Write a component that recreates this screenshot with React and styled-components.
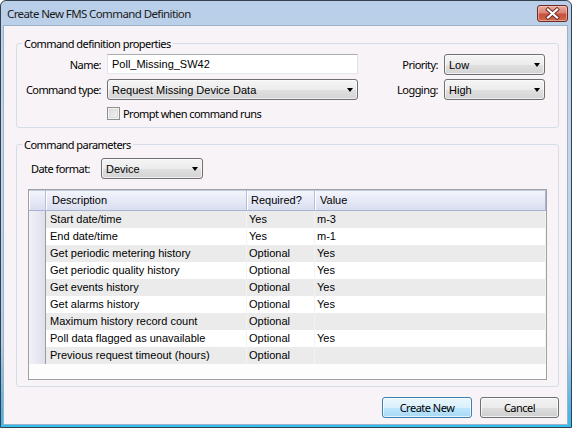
import React from "react";
import styled, { createGlobalStyle } from "styled-components";

const uiFont = `"Noto Sans", "Liberation Sans", sans-serif`;
const sysFont = `"Liberation Sans", Arial, sans-serif`;

const GlobalStyle = createGlobalStyle`
  html, body {
    margin: 0;
    padding: 0;
    background: #ffffff;
  }
  body {
    width: 572px;
    height: 428px;
    overflow: hidden;
  }
`;

const rows = [
  { desc: "Start date/time", req: "Yes", value: "m-3" },
  { desc: "End date/time", req: "Yes", value: "m-1" },
  { desc: "Get periodic metering history", req: "Optional", value: "Yes" },
  { desc: "Get periodic quality history", req: "Optional", value: "Yes" },
  { desc: "Get events history", req: "Optional", value: "Yes" },
  { desc: "Get alarms history", req: "Optional", value: "Yes" },
  { desc: "Maximum history record count", req: "Optional", value: "" },
  { desc: "Poll data flagged as unavailable", req: "Optional", value: "Yes" },
  { desc: "Previous request timeout (hours)", req: "Optional", value: "" },
];

const CloseIcon = () => (
  <svg width="29" height="15" viewBox="0 0 29 15">
    <path d="M10 3.5 L19 11.5 M19 3.5 L10 11.5" stroke="#6b2a20" strokeWidth="4" strokeLinecap="square" />
    <path d="M10 3.5 L19 11.5 M19 3.5 L10 11.5" stroke="#ffffff" strokeWidth="2.2" strokeLinecap="square" />
  </svg>
);

const App = () => {
  return (
    <>
      <GlobalStyle />
      <Window>
        <TitleBar>
          <Title>Create New FMS Command Definition</Title>
          <CloseButton>
            <CloseIcon />
          </CloseButton>
        </TitleBar>

        <Client>
          <Group>
            <Legend>Command definition properties</Legend>
            <PropsGrid>
              <Label>Name:</Label>
              <TextBox>Poll_Missing_SW42</TextBox>
              <Label>Priority:</Label>
              <Combo $w={101}>
                Low
                <Arrow />
              </Combo>

              <Label>Command type:</Label>
              <Combo $w={251}>
                Request Missing Device Data
                <Arrow />
              </Combo>
              <Label>Logging:</Label>
              <Combo $w={101}>
                High
                <Arrow />
              </Combo>

              <CheckRow>
                <CheckBox />
                <span>Prompt when command runs</span>
              </CheckRow>
            </PropsGrid>
          </Group>

          <Group $top={9}>
            <Legend>Command parameters</Legend>
            <ParamsBody>
              <DateRow>
                <DateLabel>Date format:</DateLabel>
                <Combo $w={102}>
                  Device
                  <Arrow />
                </Combo>
              </DateRow>

              <DataGrid>
                <HeaderRow>
                  <HeaderCell />
                  <HeaderCell $pad={6}>Description</HeaderCell>
                  <HeaderCell $pad={4}>Required?</HeaderCell>
                  <HeaderCell $pad={5}>Value</HeaderCell>
                </HeaderRow>
                {rows.map((r, i) => (
                  <BodyRow key={r.desc} $alt={i % 2 === 0}>
                    <RowHeader />
                    <Cell $pad={4}>{r.desc}</Cell>
                    <Cell>{r.req}</Cell>
                    <Cell>{r.value}</Cell>
                  </BodyRow>
                ))}
              </DataGrid>
            </ParamsBody>
          </Group>

          <ButtonRow>
            <Button $primary $w={90}>Create New</Button>
            <Button $w={79}>Cancel</Button>
          </ButtonRow>
        </Client>
      </Window>
    </>
  );
};

export default App;

const Window = styled.div`
  box-sizing: border-box;
  width: 572px;
  height: 428px;
  border: 1px solid #36414e;
  border-radius: 6px 6px 0 0;
  background: linear-gradient(#b9cee8 0%, #c3d6ec 30%, #b2cdea 80%, #4bb3e6 97%, #2fc0ee 100%);
  display: flex;
  flex-direction: column;
  padding: 0 3px 2px 2px;
`;

const TitleBar = styled.div`
  height: 24px;
  display: flex;
  align-items: flex-start;
  justify-content: space-between;
  padding-left: 4px;
`;

const Title = styled.div`
  font: 11.5px ${uiFont};
  letter-spacing: -0.6px;
  line-height: 25px;
  color: #1b1b1b;
`;

const CloseButton = styled.div`
  box-sizing: border-box;
  width: 31px;
  height: 17px;
  margin-top: 4px;
  border: 1px solid #6e2a22;
  border-radius: 3px;
  background: linear-gradient(#e9aa9e 0%, #db8575 45%, #c8503c 55%, #cf6a4c 100%);
  box-shadow: inset 0 0 0 1px rgba(255, 220, 210, 0.5);
  display: flex;
  align-items: center;
  justify-content: center;
`;

const Client = styled.div`
  flex: 1;
  background: #f7f3f6;
  border: 1px solid #9db1c8;
  display: flex;
  flex-direction: column;
  padding: 10px 8px 0 12px;
`;

const Group = styled.fieldset`
  margin: ${(p) => p.$top || 0}px 0 0 0;
  padding: 0;
  min-width: 0;
  border: 1px solid #d5dee6;
  border-radius: 3px;
`;

const Legend = styled.legend`
  margin-left: 5px;
  padding: 0 2px;
  font: 11px ${uiFont};
  letter-spacing: -0.55px;
  line-height: 15px;
  color: #000;
`;

const PropsGrid = styled.div`
  display: grid;
  grid-template-columns: 84px 251px 1fr 101px;
  grid-template-rows: 20px 21px 17px;
  column-gap: 6px;
  row-gap: 5px;
  padding: 3px 13px 5px 0;
`;

const Label = styled.div`
  font: 11px ${uiFont};
  letter-spacing: -0.55px;
  color: #000;
  text-align: right;
  align-self: center;
`;

const TextBox = styled.div`
  box-sizing: border-box;
  height: 20px;
  border: 1px solid;
  border-color: #abadb3 #dbdfe6 #e3e9ef #e2e3ea;
  background: #fff;
  font: 11px ${sysFont};
  color: #000;
  display: flex;
  align-items: center;
  padding-left: 4px;
`;

const Combo = styled.div`
  box-sizing: border-box;
  width: ${(p) => p.$w}px;
  height: 21px;
  border: 1px solid #707070;
  border-radius: 3px;
  background: linear-gradient(#f5f5f5 0%, #ececec 50%, #e0e0e0 52%, #d3d3d3 100%);
  box-shadow: inset 0 0 0 1px rgba(255, 255, 255, 0.6);
  font: 11px ${sysFont};
  color: #000;
  display: flex;
  align-items: center;
  padding-left: 4px;
`;

const Arrow = styled.span`
  margin-left: auto;
  margin-right: 4px;
  width: 0;
  height: 0;
  border-left: 3.5px solid transparent;
  border-right: 3.5px solid transparent;
  border-top: 4px solid #000;
`;

const CheckRow = styled.div`
  grid-column: 2 / span 2;
  display: flex;
  align-items: center;
  gap: 3px;
  font: 11px ${uiFont};
  letter-spacing: -0.55px;
  color: #000;
`;

const CheckBox = styled.span`
  box-sizing: border-box;
  width: 13px;
  height: 13px;
  border: 1px solid #8e8f8f;
  background: linear-gradient(135deg, #d8d8d8, #f7f7f7);
  box-shadow: inset 0 0 0 1px #f4f4f4, inset 0 0 0 2px #dcdcdc;
`;

const ParamsBody = styled.div`
  padding: 6px 11px 6px 11px;
`;

const DateRow = styled.div`
  display: flex;
  align-items: center;
  margin-left: 3px;
  margin-bottom: 10px;
`;

const DateLabel = styled.div`
  width: 70px;
  font: 11px ${uiFont};
  letter-spacing: -0.55px;
  color: #000;
`;

const DataGrid = styled.div`
  box-sizing: border-box;
  width: 519px;
  height: 191px;
  border: 1px solid #a0a0a0;
  background: #fdfdfd;
`;

const HeaderRow = styled.div`
  display: grid;
  grid-template-columns: 17px 201px 68px 231px;
  height: 21px;
`;

const HeaderCell = styled.div`
  box-sizing: border-box;
  border-right: 1px solid #b4bcd8;
  border-bottom: 1px solid #a9b4d2;
  border-top: 1px solid #c4cbe2;
  background: linear-gradient(#f3f5fc 0%, #e6e9f6 50%, #d9deef 100%);
  box-shadow: inset 1px 0 0 #ffffff;
  font: 11px ${sysFont};
  color: #000;
  line-height: 19px;
  padding-left: ${(p) => p.$pad || 0}px;

  &:last-child {
    border-right-color: #a9b4d2;
  }
`;

const BodyRow = styled.div`
  display: grid;
  grid-template-columns: 17px 201px 68px 231px;
  height: 17px;
  background: ${(p) => (p.$alt ? "#ebebeb" : "#ffffff")};
`;

const RowHeader = styled.div`
  border-right: 1px solid #9c9c9c;
  background: linear-gradient(to right, #f1f1f8, #dedfea);
`;

const Cell = styled.div`
  border-right: 1px solid #f3f3f3;
  font: 11px ${sysFont};
  color: #000;
  line-height: 17px;
  padding-left: ${(p) => p.$pad || 2}px;
  white-space: nowrap;
  overflow: hidden;
`;

const ButtonRow = styled.div`
  display: flex;
  justify-content: flex-end;
  gap: 8px;
  margin-top: 10px;
`;

const Button = styled.div`
  box-sizing: border-box;
  width: ${(p) => p.$w}px;
  height: 21px;
  border: 1px solid ${(p) => (p.$primary ? "#3c7fb1" : "#707070")};
  border-radius: 3px;
  background: ${(p) =>
    p.$primary
      ? "linear-gradient(#eaf6fd 0%, #d9f0fc 50%, #bee6fd 52%, #a7d9f5 100%)"
      : "linear-gradient(#f2f2f2 0%, #ebebeb 50%, #dddddd 52%, #cfcfcf 100%)"};
  box-shadow: inset 0 0 0 1px rgba(255, 255, 255, 0.7);
  font: 11px ${uiFont};
  letter-spacing: -0.5px;
  color: #000;
  display: flex;
  align-items: center;
  justify-content: center;
`;
